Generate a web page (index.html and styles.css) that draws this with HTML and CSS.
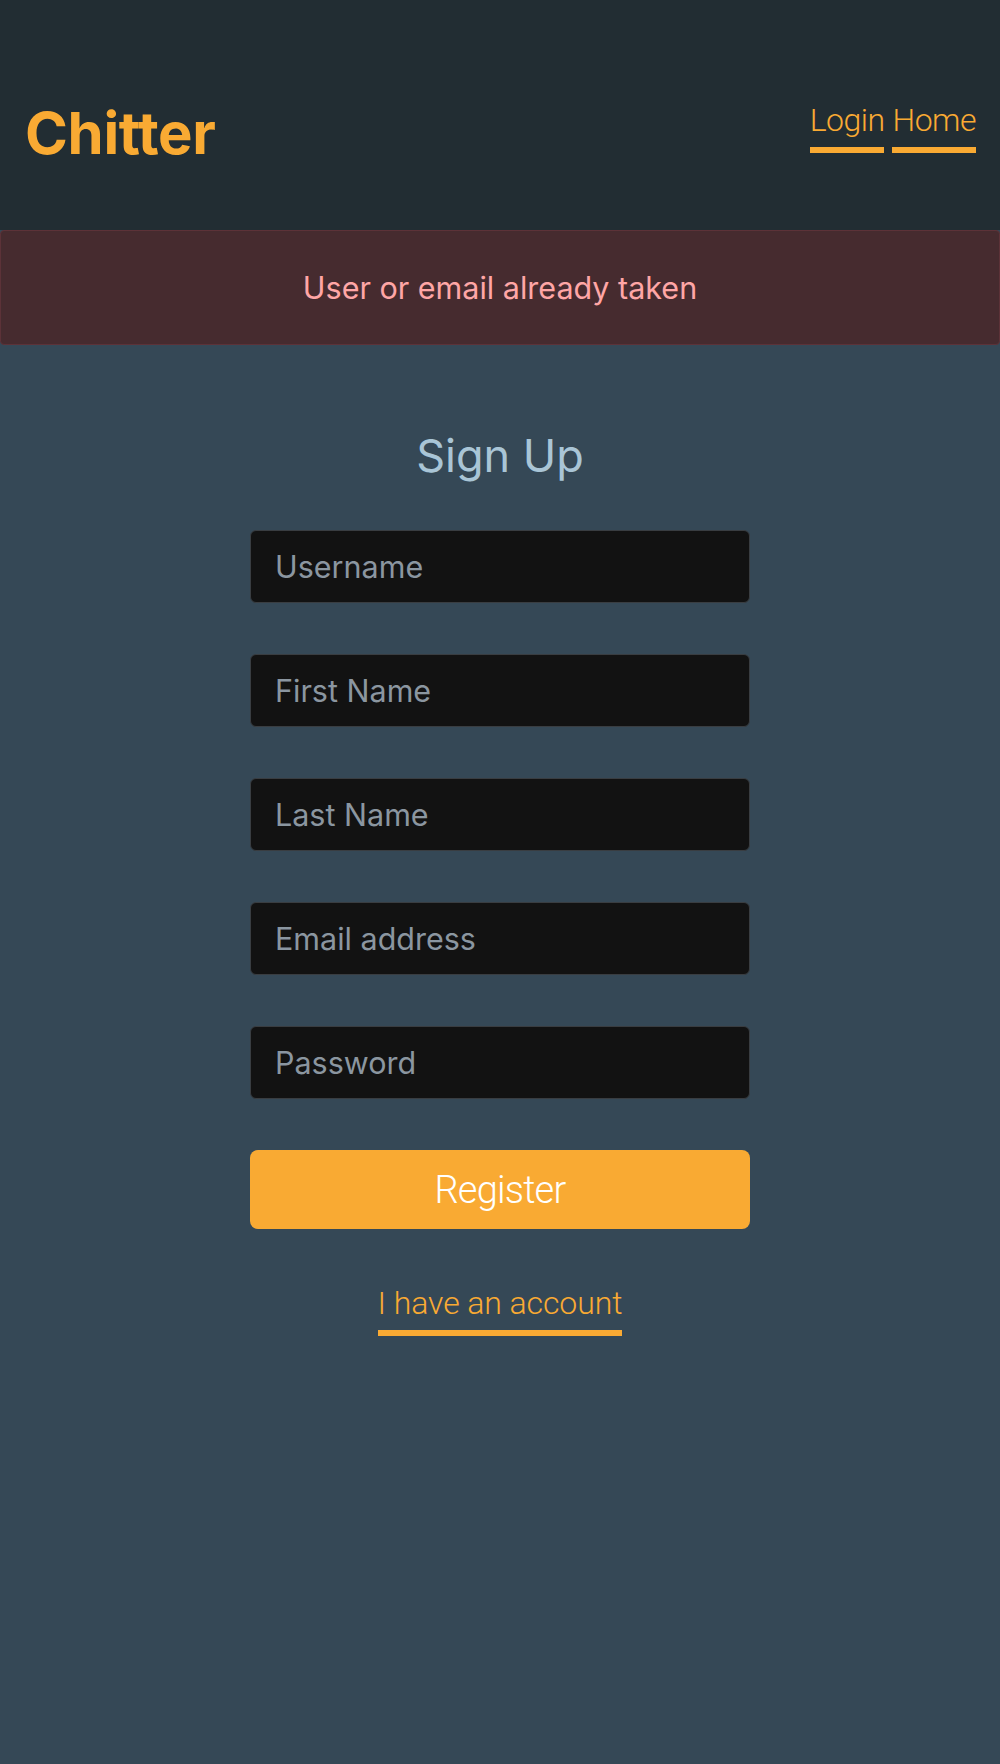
FILE: index.html
```html
<!DOCTYPE html>
<html lang="en">
<head>
<meta charset="utf-8">
<title>Chitter - Sign Up</title>
<link rel="stylesheet" href="styles.css">
</head>
<body>
<header class="topbar">
  <a class="logo" href="#">Chitter</a>
  <nav class="nav">
    <a class="nav-link" href="#">Login</a>
    <a class="nav-link" href="#">Home</a>
  </nav>
</header>
<div class="alert">User or email already taken</div>
<main class="signup">
  <h1 class="title">Sign Up</h1>
  <form class="form">
    <input class="field" type="text" placeholder="Username">
    <input class="field" type="text" placeholder="First Name">
    <input class="field" type="text" placeholder="Last Name">
    <input class="field" type="email" placeholder="Email address">
    <input class="field" type="password" placeholder="Password">
    <button class="btn" type="button">Register</button>
  </form>
  <a class="account-link" href="#">I have an account</a>
</main>
</body>
</html>
```

FILE: styles.css
```css
html, body {
  margin: 0;
  padding: 0;
}
body {
  background: #354856;
  min-height: 1764px;
  font-family: Inter, "Noto Sans", sans-serif;
}
a { text-decoration: none; }

.topbar {
  box-sizing: border-box;
  height: 230px;
  background: #222d33;
  display: flex;
  justify-content: space-between;
  align-items: flex-start;
  padding: 100px 24px 0 25px;
}
.logo {
  margin-top: 4px;
  font-family: Inter, sans-serif;
  font-weight: 700;
  font-size: 58px;
  line-height: 58px;
  color: #f9aa33;
  letter-spacing: -0.3px;
}
.nav {
  display: flex;
  gap: 8px;
}
.nav-link {
  font-family: Roboto, sans-serif;
  font-weight: 300;
  font-size: 32px;
  line-height: 40px;
  letter-spacing: -0.5px;
  color: #f9aa33;
  padding-bottom: 7px;
  border-bottom: 6px solid #f9aa33;
}

.alert {
  box-sizing: border-box;
  height: 115px;
  background: #462b2f;
  border: 1px solid #5c3238;
  border-radius: 4px;
  display: flex;
  align-items: center;
  justify-content: center;
  color: #ffa6a6;
  font-size: 30.5px;
}

.signup {
  display: flex;
  flex-direction: column;
  align-items: center;
  padding-top: 84px;
}
.title {
  margin: 0 0 47px;
  font-weight: 400;
  font-size: 45px;
  line-height: 1.2;
  color: #a9c5d6;
}
.form {
  width: 500px;
  display: flex;
  flex-direction: column;
}
.field {
  box-sizing: border-box;
  height: 73px;
  margin: 0 0 51px;
  padding: 0 24px;
  background: #121212;
  border: 1px solid #393d41;
  border-radius: 6px;
  color: #dde3e8;
  font-family: Inter, sans-serif;
  font-size: 30.5px;
  outline: none;
}
.field::placeholder {
  color: #8b96a0;
}
.btn {
  height: 79px;
  border: none;
  border-radius: 8px;
  background: #f9aa33;
  color: #ffffff;
  font-family: Roboto, sans-serif;
  font-weight: 300;
  font-size: 38px;
  letter-spacing: -0.8px;
  cursor: pointer;
}
.account-link {
  margin-top: 55px;
  font-family: Roboto, sans-serif;
  font-weight: 300;
  font-size: 32px;
  line-height: 38px;
  letter-spacing: -0.1px;
  color: #f9aa33;
  padding-bottom: 8px;
  border-bottom: 6px solid #f9aa33;
}
```
